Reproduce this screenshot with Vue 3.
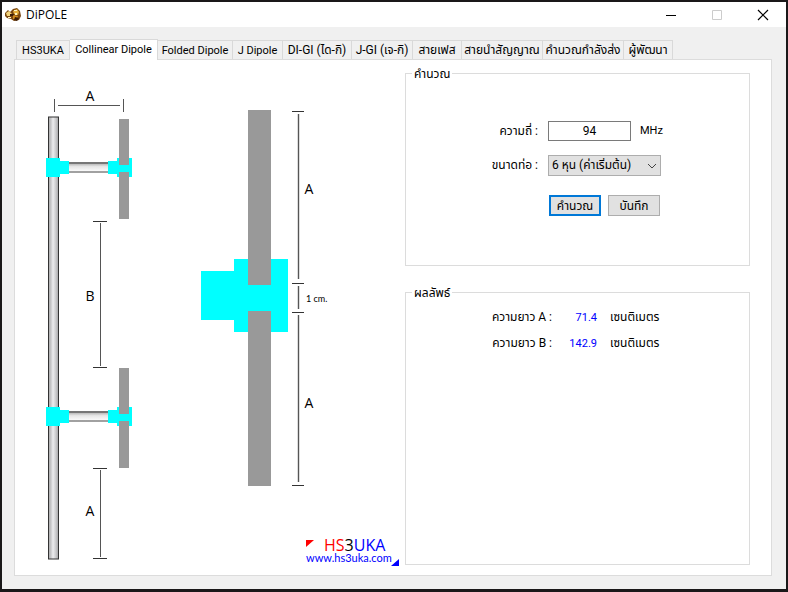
<script setup>
import { ref, computed } from 'vue'

const tabs = [
  { label: 'HS3UKA', latin: true },
  { label: 'Collinear Dipole', latin: true },
  { label: 'Folded Dipole', latin: true },
  { label: 'J Dipole', latin: true },
  { label: 'DI-GI (ได-กิ)' },
  { label: 'J-GI (เจ-กิ)' },
  { label: 'สายเฟส' },
  { label: 'สายนำสัญญาณ' },
  { label: 'คำนวณกำลังส่ง' },
  { label: 'ผู้พัฒนา' },
]
const active = ref(1)
const frequency = ref('94')
const size = ref('6')
const used = ref(94)

const lengthA = computed(() => (6715 / used.value).toFixed(1))
const lengthB = computed(() => (13430 / used.value).toFixed(1))

function calculate() {
  const value = parseFloat(frequency.value)
  if (value > 0) used.value = value
}
</script>

<template>
  <div class="window">
    <header class="titlebar">
      <svg class="app-icon" viewBox="0 0 16 16" aria-hidden="true">
        <path d="M0 6 3 3 5 5 8 2 12 1 15 4 16 9 14 13 9 14 6 12 2 11 0 9Z" fill="#7a4710" />
        <path d="M1 6 4 4 7 7 5 9 2 9Z" fill="#f1d27a" />
        <path d="M8 4 12 2 14 5 13 8 9 7Z" fill="#e8b03a" />
        <path d="M8 8 13 9 12 12 8 12Z" fill="#d08a1c" />
        <path d="M5 7 9 7 8 9 5 9ZM10 10 14 11 12 14 9 13Z" fill="#3d1d06" />
        <path d="M9 3h3v1H9zM3 10h3v1H3zM10 6h2v2h-2z" fill="#fff3c0" />
      </svg>
      <h1 class="title">DiPOLE</h1>
      <div class="window-buttons">
        <button type="button" aria-label="Minimize">
          <svg viewBox="0 0 12 12"><path d="M1 6.5H11" stroke="#000" /></svg>
        </button>
        <button type="button" aria-label="Maximize" disabled>
          <svg viewBox="0 0 12 12"><path d="M1.5 1.5H10.500V10.500H1.500Z" fill="none" stroke="#ccc" /></svg>
        </button>
        <button type="button" aria-label="Close">
          <svg viewBox="0 0 12 12"><path d="M1 1 11 11M11 1 1 11" stroke="#000" stroke-width="1.200" /></svg>
        </button>
      </div>
    </header>

    <main class="body">
      <div class="tabs" role="tablist">
        <button
          v-for="(tab, i) in tabs"
          :key="tab.label"
          type="button"
          role="tab"
          class="tab"
          :class="{ active: i === active, latin: tab.latin }"
          :aria-selected="i === active"
          @click="active = i"
        >{{ tab.label }}</button>
      </div>

      <div class="page" role="tabpanel">
        <svg class="diagram" viewBox="15 60 390 515" role="img" aria-label="Collinear Dipole">
          <defs>
            <linearGradient id="mast" x1="0" x2="1" y1="0" y2="0">
              <stop offset="0" stop-color="#aaa" />
              <stop offset="0.250" stop-color="#c8c8ca" />
              <stop offset="0.450" stop-color="#ececee" />
              <stop offset="0.700" stop-color="#cfcfd1" />
              <stop offset="1" stop-color="#a4a4a6" />
            </linearGradient>
            <linearGradient id="boom" x1="0" x2="0" y1="0" y2="1">
              <stop offset="0" stop-color="#aaa" />
              <stop offset="0.400" stop-color="#e6e6e6" />
              <stop offset="1" stop-color="#fff" />
            </linearGradient>
          </defs>

          <rect x="48.500" y="117" width="10" height="442" fill="url(#mast)" stroke="#333" />
          <g v-for="y in [168, 417]" :key="y">
            <rect x="68" :y="y - 5" width="41" height="9" fill="url(#boom)" />
            <path :d="`M68 ${y - 5}H109`" stroke="#777" stroke-width="2" />
            <path :d="`M68 ${y + 4}H109`" stroke="#444" />
            <path
              :d="`M46 ${y - 10}H60V${y - 7}H69V${y + 6}H60V${y + 9}H46ZM108 ${y - 7}H117V${y - 10}H132V${y + 9}H117V${y + 6}H108Z`"
              fill="#0ff"
            />
            <rect x="119" :y="y - 49" width="10" height="46" fill="#999" />
            <rect x="119" :y="y + 4" width="10" height="47" fill="#999" />
          </g>

          <path d="M201 271H234V259H288V332H234V320H201Z" fill="#0ff" />
          <rect x="248" y="110" width="23" height="175" fill="#999" />
          <rect x="248" y="311" width="23" height="175" fill="#999" />

          <g fill="none" stroke="#555">
            <path d="M54.500 99V112M123.500 99V112M58 105.500H120" />
            <path d="M100.500 223V366M100.500 470V557" />
            <path d="M298.500 114V279M298.500 286V309M298.500 315V482" stroke-width="1.400" />
            <path d="M93 221.500H107M93 367.500H107M93 468.500H107M93 558.500H107" stroke="#333" />
            <path d="M292 111.500H304M292 283.500H304M292 312.500H304M292 485.500H304" stroke="#333" />
          </g>
          <g class="mark">
            <text x="90" y="101">A</text>
            <text x="90" y="301">B</text>
            <text x="90" y="516">A</text>
            <text x="309" y="194">A</text>
            <text x="309" y="408">A</text>
          </g>
          <text class="small" x="306" y="302">1 cm.</text>

          <path d="M306 540H314L306 547Z" fill="#f00" />
          <path d="M399 559V566H391Z" fill="#00f" />
          <text class="brand" x="324" y="551"><tspan fill="#f00">HS</tspan><tspan fill="#000">3</tspan><tspan fill="#00f">UKA</tspan></text>
          <text class="site" x="306" y="562">www.hs3uka.com</text>
        </svg>

        <div class="panels">
          <fieldset class="group">
            <legend>คำนวณ</legend>
            <form class="form" @submit.prevent="calculate">
              <label for="frequency">ความถี่ :</label>
              <div class="field">
                <input id="frequency" v-model="frequency" type="text" inputmode="decimal" />
                <span class="latin">MHz</span>
              </div>
              <label for="size">ขนาดท่อ :</label>
              <div class="field">
                <div class="select">
                  <select id="size" v-model="size">
                    <option value="6">6 หุน (ค่าเริ่มต้น)</option>
                  </select>
                  <svg class="chevron" viewBox="0 0 10 6" aria-hidden="true">
                    <path d="M1 1 5 5 9 1" fill="none" stroke="#444" />
                  </svg>
                </div>
              </div>
              <div class="actions">
                <button type="submit" class="btn primary">คำนวณ</button>
                <button type="button" class="btn">บันทึก</button>
              </div>
            </form>
          </fieldset>

          <fieldset class="group results">
            <legend>ผลลัพธ์</legend>
            <dl class="lengths">
              <dt>ความยาว A :</dt>
              <dd class="value latin">{{ lengthA }}</dd>
              <dd>เซนติเมตร</dd>
              <dt>ความยาว B :</dt>
              <dd class="value latin">{{ lengthB }}</dd>
              <dd>เซนติเมตร</dd>
            </dl>
          </fieldset>
        </div>
      </div>
    </main>
  </div>
</template>

<style>
body {
  margin: 0;
  background: #1a1819;
}
</style>

<style scoped>
* {
  box-sizing: border-box;
}

.window {
  display: flex;
  flex-direction: column;
  min-height: 100vh;
  border: 2px solid #1a1819;
  border-bottom-width: 3px;
  background: #f0f0f0;
  color: #000;
  font-family: Roboto, "Noto Sans Thai", "Liberation Sans", sans-serif;
  font-size: 12px;
  line-height: 14px;
}

button,
input,
select {
  margin: 0;
  color: inherit;
  font: inherit;
}

.latin {
  font-size: 11px;
  line-height: 16px;
}

.titlebar {
  display: flex;
  align-items: center;
  height: 25px;
  padding-left: 3px;
  background: #fff;
}

.app-icon {
  width: 16px;
  height: 16px;
}

.title {
  margin: 0 auto 0 5px;
  font: 12px/16px "Open Sans", sans-serif;
}

.window-buttons {
  display: flex;
}

.window-buttons button {
  display: grid;
  place-items: center;
  width: 46px;
  height: 25px;
  padding: 0;
  border: 0;
  background: none;
}

.window-buttons svg {
  width: 12px;
  height: 12px;
}

.body {
  display: flex;
  flex: 1;
  flex-direction: column;
  padding: 12px 14px 13px 12px;
}

.tabs {
  display: grid;
  grid-template-columns: 54px 88px 75px 50px 69px 61px 49px 81px 81px 49px;
  align-items: end;
  height: 21px;
  padding-left: 2px;
}

.tab {
  height: 19px;
  margin-bottom: 1px;
  padding: 0;
  border: 1px solid #d9d9d9;
  border-width: 1px 1px 0 0;
  background: #f0f0f0;
  text-align: center;
  white-space: nowrap;
}

.tab.latin {
  padding-top: 2px;
  font-size: 11px;
}

.tab:first-child {
  border-left-width: 1px;
}

.tab.active {
  z-index: 1;
  height: 21px;
  margin-bottom: 0;
  padding-top: 0;
  background: #fff;
}

.page {
  display: grid;
  flex: 1;
  grid-template-columns: 390px minmax(0, 1fr);
  margin-top: -1px;
  padding-right: 21px;
  border: 1px solid #dcdcdc;
  background: #fff;
}

.diagram {
  display: block;
  width: 100%;
}

.diagram text {
  font-family: "Open Sans", "Noto Sans", sans-serif;
}

.diagram .mark text {
  font-size: 14px;
  text-anchor: middle;
}

.diagram .small {
  font-family: Lato, sans-serif;
  font-size: 9px;
}

.diagram .brand {
  font-size: 16px;
}

.diagram .site {
  fill: #00f;
  font-family: Lato, sans-serif;
  font-size: 11px;
}

.panels {
  display: flex;
  flex-direction: column;
  gap: 20px;
  padding: 7px 0 10px;
}

.group {
  min-width: 0;
  min-height: 199px;
  margin: 0;
  padding: 0;
  border: 1px solid #dcdcdc;
}

.group legend {
  height: 13px;
  margin-left: 6px;
  padding: 0 2px;
}

.results {
  flex: 1;
}

.form {
  display: grid;
  grid-template-columns: 132px minmax(0, 1fr);
  align-items: center;
  column-gap: 10px;
  padding-top: 34px;
}

.form label {
  text-align: right;
}

.field {
  display: flex;
  align-items: center;
  gap: 9px;
  height: 34px;
}

.field input {
  width: 83px;
  height: 20px;
  padding: 0;
  border: 1px solid #7a7a7a;
  background: #fff;
  text-align: center;
}

.select {
  position: relative;
}

.select select {
  width: 113px;
  height: 21px;
  padding: 0 18px 0 3px;
  border: 1px solid #adadad;
  border-radius: 0;
  background: #e1e1e1;
  appearance: none;
}

.chevron {
  position: absolute;
  top: 8px;
  right: 4px;
  width: 10px;
  height: 6px;
  pointer-events: none;
}

.actions {
  display: flex;
  grid-column: 2;
  gap: 7px;
  padding: 13px 0 0 1px;
}

.btn {
  width: 52px;
  height: 21px;
  padding: 0;
  border: 1px solid #adadad;
  background: #e1e1e1;
}

.btn.primary {
  border: 2px solid #0078d7;
}

.lengths {
  display: grid;
  grid-template-columns: 146px 45px minmax(0, 1fr);
  row-gap: 10px;
  margin: 0;
  padding-top: 11px;
}

.lengths dt {
  text-align: right;
}

.lengths dd {
  margin: 0 0 0 13px;
}

.lengths .value {
  margin: 0;
  color: #00f;
  text-align: right;
}
</style>
